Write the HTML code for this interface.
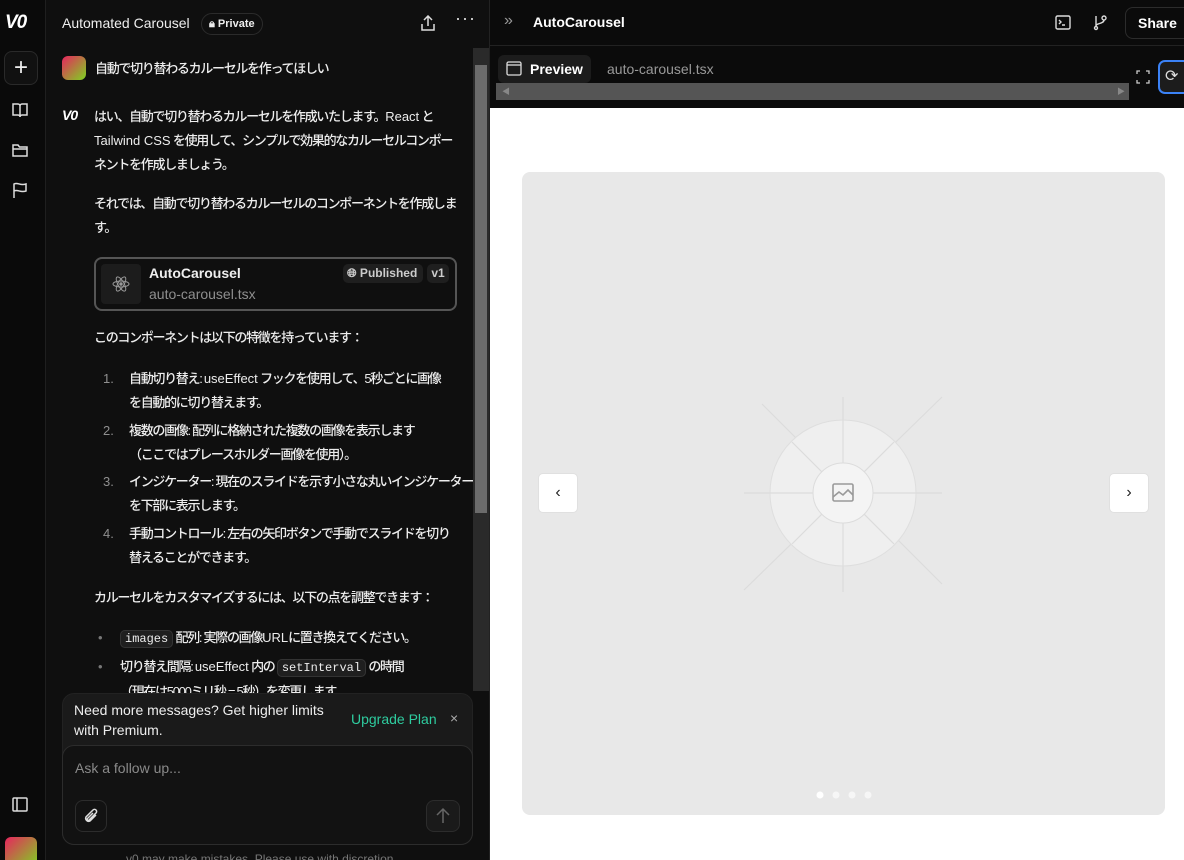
<!DOCTYPE html>
<html><head><meta charset="utf-8"><style>
*{box-sizing:border-box;margin:0;padding:0}
html,body{width:1184px;height:860px;overflow:hidden}
body{background:#0b0b0b;font-family:"Liberation Sans","Noto Sans CJK JP",sans-serif;color:#ededed;position:relative}
.a{position:absolute}
.t{font-size:13px;line-height:24px;color:#ededed;font-weight:500;white-space:nowrap;letter-spacing:-1.3px}
.t .l{letter-spacing:0}
.code{font-family:"Liberation Mono",monospace;font-size:12px;letter-spacing:0;background:#1f1f1f;border:1px solid #333;border-radius:5px;padding:1px 4px}
.num{color:#8f8f8f;display:inline-block;width:26px;text-align:left;letter-spacing:0}
.logo{font-weight:900;color:#fff;font-style:italic;letter-spacing:-1px;font-family:"Liberation Sans",sans-serif}
</style></head><body>
<div class="a" style="left:0;top:0;width:46px;height:860px;background:#0a0a0a;border-right:1px solid #1f1f1f"></div>
<div class="a logo" style="left:5px;top:12px;font-size:19px">V0</div>
<div class="a" style="left:4px;top:51px;width:34px;height:34px;border:1px solid #2a2a2a;border-radius:8px;background:#111;color:#eee;font-size:24px;text-align:center;line-height:31px">+</div>
<svg class="a" style="left:11px;top:101px" width="18" height="18" viewBox="0 0 18 18" fill="none" stroke="#ddd" stroke-width="1.5"><path d="M2 3h5a2 2 0 0 1 2 2v11a2 2 0 0 0-2-2H2zM16 3h-5a2 2 0 0 0-2 2v11a2 2 0 0 1 2-2h5z"/></svg>
<svg class="a" style="left:11px;top:141px" width="18" height="18" viewBox="0 0 18 18" fill="none" stroke="#ddd" stroke-width="1.5"><path d="M2 4h5l1.5 2H16v9H2zM2 8h14"/></svg>
<svg class="a" style="left:12px;top:181px" width="18" height="18" viewBox="0 0 18 18" fill="none" stroke="#ddd" stroke-width="1.5"><path d="M2 17V3c4-2 6 2 12 0v7c-6 2-8-2-12 0"/></svg>
<svg class="a" style="left:12px;top:797px" width="16" height="15" viewBox="0 0 16 15" fill="none" stroke="#ddd" stroke-width="1.5"><rect x="1" y="1" width="14" height="13" rx="1"/><path d="M5 1v13"/></svg>
<div class="a" style="left:5px;top:837px;width:32px;height:30px;border-radius:6px;background:linear-gradient(135deg,#e8245e,#7ed321)"></div>
<div class="a" style="left:46px;top:0;width:444px;height:860px;background:#0f0f0f;border-right:1px solid #222"></div>
<div class="a" style="left:62px;top:15px;font-size:14px;color:#eee">Automated Carousel</div>
<div class="a" style="left:201px;top:13px;height:22px;padding:0 7px;border:1px solid #2b2b2b;border-radius:11px;font-size:11px;font-weight:700;line-height:20px;color:#eee">🔒︎ Private</div>
<svg class="a" style="left:420px;top:15px" width="16" height="17" viewBox="0 0 16 17" fill="none" stroke="#ddd" stroke-width="1.5"><path d="M8 11V2M4 5l4-4 4 4M2 9v6h12V9"/></svg>
<div class="a" style="left:455px;top:8px;font-size:18px;color:#ddd;letter-spacing:1px">···</div>
<div class="a" style="left:473px;top:48px;width:16px;height:643px;background:#2a2a2a"></div>
<div class="a" style="left:475px;top:65px;width:12px;height:448px;background:#6b6b6b"></div>
<div class="a" style="left:62px;top:56px;width:24px;height:24px;border-radius:6px;background:linear-gradient(135deg,#e8245e,#7ed321)"></div>
<div class="a t" style="left:95px;top:57px">自動で切り替わるカルーセルを作ってほしい</div>
<div class="a logo" style="left:62px;top:107px;font-size:14px">V0</div>
<div class="a t" style="left:94px;top:105px">はい、自動で切り替わるカルーセルを作成いたします。<span class="l">React</span> と<br><span class="l">Tailwind CSS</span> を使用して、シンプルで効果的なカルーセルコンポー<br>ネントを作成しましょう。</div>
<div class="a t" style="left:94px;top:192px">それでは、自動で切り替わるカルーセルのコンポーネントを作成しま<br>す。</div>
<div class="a" style="left:94px;top:257px;width:363px;height:54px;border:2px solid #555;border-radius:8px;background:#0f0f0f"></div>
<div class="a" style="left:101px;top:264px;width:40px;height:40px;border-radius:4px;background:#1c1c1c"></div>
<svg class="a" style="left:111px;top:274px" width="20" height="20" viewBox="-10 -10 20 20" fill="none" stroke="#999" stroke-width="1"><ellipse rx="8" ry="3"/><ellipse rx="8" ry="3" transform="rotate(60)"/><ellipse rx="8" ry="3" transform="rotate(-60)"/><circle r="1.2" fill="#999"/></svg>
<div class="a" style="left:149px;top:265px;font-size:14px;font-weight:700;color:#eee">AutoCarousel</div>
<div class="a" style="left:149px;top:286px;font-size:14px;color:#8f8f8f">auto-carousel.tsx</div>
<div class="a" style="left:343px;top:264px;width:80px;height:19px;border-radius:5px;background:#1f1f1f;font-size:12px;font-weight:700;line-height:19px;padding-left:4px;color:#ccc">🌐︎ Published</div>
<div class="a" style="left:427px;top:264px;width:22px;height:19px;border-radius:5px;background:#1f1f1f;font-size:12px;font-weight:700;line-height:19px;text-align:center;color:#ccc">v1</div>
<div class="a t" style="left:94px;top:326px">このコンポーネントは以下の特徴を持っています：</div>
<div class="a t" style="left:103px;top:367px"><span class="num">1.</span>自動切り替え: <span class="l">useEffect</span> フックを使用して、5秒ごとに画像<br><span class="num"></span>を自動的に切り替えます。</div>
<div class="a t" style="left:103px;top:419px"><span class="num">2.</span>複数の画像: 配列に格納された複数の画像を表示します<br><span class="num"></span>（ここではプレースホルダー画像を使用）。</div>
<div class="a t" style="left:103px;top:470px"><span class="num">3.</span>インジケーター: 現在のスライドを示す小さな丸いインジケーター<br><span class="num"></span>を下部に表示します。</div>
<div class="a t" style="left:103px;top:522px"><span class="num">4.</span>手動コントロール: 左右の矢印ボタンで手動でスライドを切り<br><span class="num"></span>替えることができます。</div>
<div class="a t" style="left:94px;top:586px">カルーセルをカスタマイズするには、以下の点を調整できます：</div>
<div class="a t" style="left:98px;top:626px"><span style="color:#777;display:inline-block;width:22px">•</span><span class="code">images</span> 配列: 実際の画像<span class="l">URL</span>に置き換えてください。</div>
<div class="a t" style="left:98px;top:655px"><span style="color:#777;display:inline-block;width:22px">•</span>切り替え間隔: <span class="l">useEffect</span> 内の <span class="code">setInterval</span> の時間<br><span style="display:inline-block;width:22px"></span>（現在は5000ミリ秒 = 5秒）を変更します</div>
<div class="a" style="left:62px;top:693px;width:411px;height:152px;border-radius:12px;background:#1a1a1a;border:1px solid #222"></div>
<div class="a" style="left:74px;top:700px;font-size:14px;line-height:20px;color:#eee">Need more messages? Get higher limits<br>with Premium.</div>
<div class="a" style="left:351px;top:711px;font-size:14px;color:#2ecc9f">Upgrade Plan</div>
<div class="a" style="left:450px;top:710px;font-size:14px;color:#aaa">×</div>
<div class="a" style="left:62px;top:745px;width:411px;height:100px;border-radius:12px;background:#121212;border:1px solid #2c2c2c"></div>
<div class="a" style="left:75px;top:760px;font-size:14px;color:#8a8a8a">Ask a follow up...</div>
<div class="a" style="left:75px;top:800px;width:32px;height:32px;border:1px solid #2c2c2c;border-radius:8px"></div>
<svg class="a" style="left:82px;top:807px" width="18" height="18" viewBox="0 0 18 18" fill="none" stroke="#ddd" stroke-width="1.5"><path d="M14 8l-6 6a3 3 0 0 1-4-4l7-7a2 2 0 0 1 3 3l-7 7a1 1 0 0 1-1.5-1.5L11 6"/></svg>
<div class="a" style="left:426px;top:800px;width:34px;height:32px;border:1px solid #2c2c2c;border-radius:8px;background:#1a1a1a"></div>
<svg class="a" style="left:435px;top:807px" width="16" height="18" viewBox="0 0 16 18" fill="none" stroke="#666" stroke-width="1.5"><path d="M8 16V2M2 8l6-6 6 6"/></svg>
<div class="a" style="left:126px;top:852px;font-size:12px;color:#777">v0 may make mistakes. Please use with discretion.</div>
<div class="a" style="left:490px;top:0;width:694px;height:46px;background:#0b0b0b;border-bottom:1px solid #222"></div>
<div class="a" style="left:504px;top:12px;font-size:16px;color:#999">»</div>
<div class="a" style="left:533px;top:14px;font-size:14px;font-weight:700;color:#fff">AutoCarousel</div>
<svg class="a" style="left:1055px;top:15px" width="16" height="15" viewBox="0 0 16 15" fill="none" stroke="#ddd" stroke-width="1.4"><rect x="1" y="1" width="14" height="13" rx="1.5"/><path d="M4 5l2 2-2 2M7 10h3"/></svg>
<svg class="a" style="left:1092px;top:14px" width="16" height="17" viewBox="0 0 16 17" fill="none" stroke="#ddd" stroke-width="1.4"><circle cx="4" cy="14" r="1.5"/><circle cx="12" cy="4" r="2"/><path d="M4 12V2M12 6c0 4-8 3-8 6"/></svg>
<div class="a" style="left:1125px;top:7px;width:70px;height:32px;border:1px solid #2c2c2c;border-radius:8px;font-size:14px;font-weight:700;line-height:30px;padding-left:12px;color:#fff">Share</div>
<div class="a" style="left:490px;top:46px;width:694px;height:62px;background:#0b0b0b"></div>
<div class="a" style="left:498px;top:55px;width:93px;height:28px;border-radius:6px;background:#1c1c1c"></div>
<svg class="a" style="left:506px;top:61px" width="16" height="15" viewBox="0 0 16 15" fill="none" stroke="#ddd" stroke-width="1.3"><rect x="1" y="1" width="14" height="13" rx="1.5"/><path d="M1 4h14"/></svg>
<div class="a" style="left:530px;top:61px;font-size:14px;font-weight:700;color:#fff">Preview</div>
<div class="a" style="left:607px;top:61px;font-size:14px;color:#999">auto-carousel.tsx</div>
<div class="a" style="left:496px;top:83px;width:633px;height:17px;background:#555"></div>
<div class="a" style="left:502px;top:86px;font-size:8px;color:#888">◀</div>
<div class="a" style="left:1117px;top:86px;font-size:8px;color:#888">▶</div>
<svg class="a" style="left:1136px;top:70px" width="14" height="14" viewBox="0 0 14 14" fill="none" stroke="#ccc" stroke-width="1.3"><path d="M1 4V1h3M10 1h3v3M13 10v3h-3M4 13H1v-3"/></svg>
<div class="a" style="left:1158px;top:60px;width:40px;height:34px;border:2px solid #3b82f6;border-radius:7px;background:#1c1c1c"></div>
<div class="a" style="left:1165px;top:66px;font-size:16px;color:#ddd">⟳</div>
<div class="a" style="left:490px;top:108px;width:694px;height:752px;background:#fff"></div>
<div class="a" style="left:522px;top:172px;width:643px;height:643px;background:#e8e8e8;border-radius:8px;overflow:hidden">
<svg width="643" height="643" style="position:absolute;left:0;top:0">
<g stroke="#dcdcdc" stroke-width="1.2"><line x1="321" y1="225" x2="321" y2="420"/><line x1="222" y1="321" x2="420" y2="321"/><line x1="240" y1="232" x2="420" y2="412"/><line x1="420" y1="225" x2="222" y2="418"/></g>
<circle cx="321" cy="321" r="73" fill="#efefef" stroke="#dedede"/>
<g stroke="#dcdcdc" stroke-width="1.2"><line x1="321" y1="248" x2="321" y2="394"/><line x1="248" y1="321" x2="394" y2="321"/><line x1="270" y1="270" x2="372" y2="372"/><line x1="372" y1="270" x2="270" y2="372"/></g>
<circle cx="321" cy="321" r="30" fill="#f4f4f4" stroke="#dcdcdc"/>
<g fill="none" stroke="#999" stroke-width="1.6"><rect x="311" y="312" width="20" height="17" rx="1.5"/><path d="M311 325l6-5 4 3 5-5 5 5"/></g>
<circle cx="298" cy="623" r="3.5" fill="#fff"/><circle cx="314" cy="623" r="3.5" fill="#fff" opacity=".6"/><circle cx="330" cy="623" r="3.5" fill="#fff" opacity=".6"/><circle cx="346" cy="623" r="3.5" fill="#fff" opacity=".6"/>
</svg>
<div class="a" style="left:16px;top:301px;width:40px;height:40px;border-radius:5px;background:#fff;border:1px solid #e0e0e0;text-align:center;line-height:38px;font-size:16px;color:#222">‹</div>
<div class="a" style="left:587px;top:301px;width:40px;height:40px;border-radius:5px;background:#fff;border:1px solid #e0e0e0;text-align:center;line-height:38px;font-size:16px;color:#222">›</div>
</div>
</body></html>
